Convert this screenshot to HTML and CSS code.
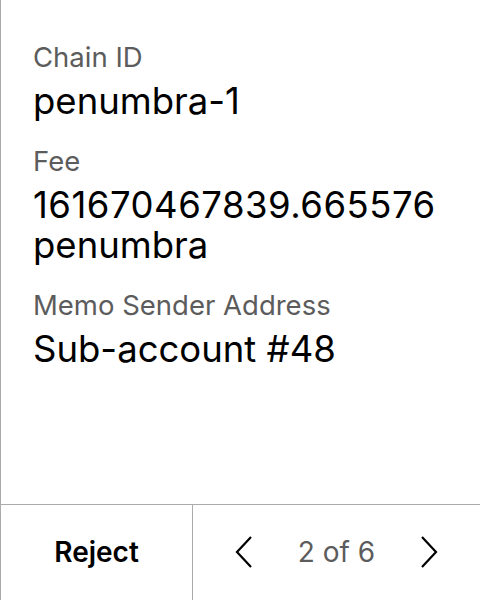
FILE: index.html
```html
<!DOCTYPE html>
<html>
<head>
<meta charset="utf-8">
<link rel="stylesheet" href="styles.css">
</head>
<body>
<div class="panel">
  <div class="content">
    <div class="field">
      <div class="label">Chain ID</div>
      <div class="value">penumbra-1</div>
    </div>
    <div class="field">
      <div class="label">Fee</div>
      <div class="value"><span class="amount">161670467839.665576</span> penumbra</div>
    </div>
    <div class="field">
      <div class="label">Memo Sender Address</div>
      <div class="value">Sub-account #48</div>
    </div>
  </div>
  <div class="footer">
    <div class="reject">Reject</div>
    <div class="pager">
      <svg class="chev" width="18" height="32" viewBox="0 0 18 32"><polyline points="16,1 2,16 16,31" fill="none" stroke="#000" stroke-width="2.2"/></svg>
      <span class="count">2 of 6</span>
      <svg class="chev" width="18" height="32" viewBox="0 0 18 32"><polyline points="2,1 16,16 2,31" fill="none" stroke="#000" stroke-width="2.2"/></svg>
    </div>
  </div>
</div>
</body>
</html>
```

FILE: styles.css
```css
html, body {
  margin: 0;
  padding: 0;
  background: #fff;
}
body {
  font-family: Inter, "Noto Sans", sans-serif;
  color: #000;
}
.panel {
  height: 600px;
  box-sizing: border-box;
  border-left: 1px solid #ababab;
  display: flex;
  flex-direction: column;
}
.content {
  flex: 1;
  padding: 37px 32px 0 32px;
  display: flex;
  flex-direction: column;
  gap: 20px;
}
.field {
  display: flex;
  flex-direction: column;
  gap: 4px;
}
.label {
  font-size: 27.5px;
  line-height: 40px;
  color: #5c5c5c;
}
.value {
  font-size: 36.5px;
  line-height: 40px;
  color: #000;
  width: 415px;
}
.amount {
  letter-spacing: 0.5px;
}
.footer {
  height: 96px;
  box-sizing: border-box;
  border-top: 1px solid #ababab;
  display: grid;
  grid-template-columns: 191px 1fr;
}
.reject {
  display: flex;
  align-items: center;
  justify-content: center;
  font-size: 28px;
  font-weight: 600;
  padding-bottom: 1px;
}
.pager {
  border-left: 1px solid #ababab;
  display: flex;
  align-items: center;
  justify-content: center;
  gap: 45px;
  padding-bottom: 1px;
}
.count {
  font-size: 28px;
  color: #5c5c5c;
}
.chev {
  display: block;
}
```
